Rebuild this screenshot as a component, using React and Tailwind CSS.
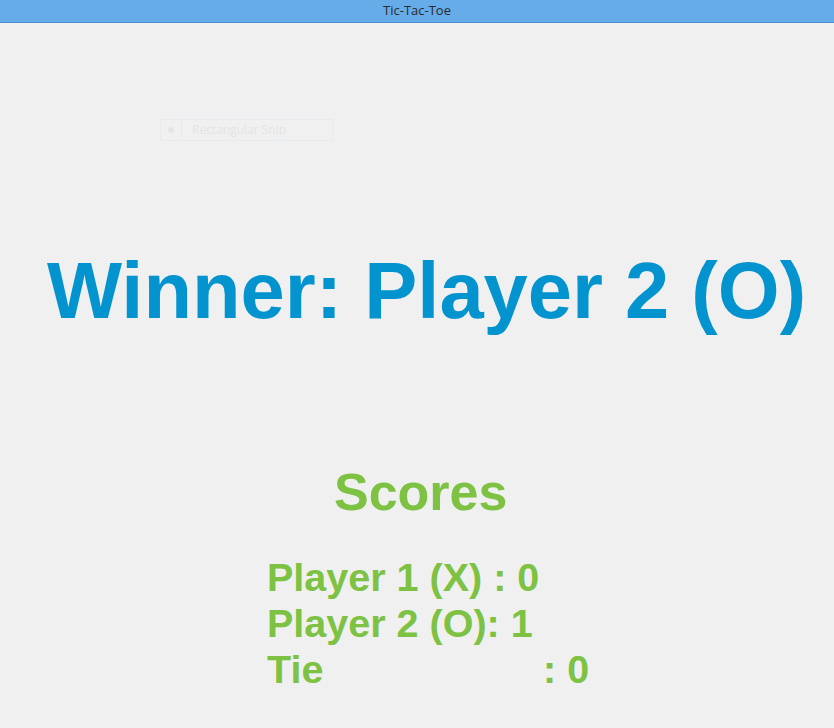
export default function App() {
  const arial = { fontFamily: '"Liberation Sans", Arial, sans-serif' };
  return (
    <div className="relative w-[834px] h-[728px] bg-[#f0f0f0] overflow-hidden" style={arial}>
      <div className="h-[23px] bg-[#65ace8] border-b border-[#4a90cf] flex items-center justify-center">
        <span className="text-[13px] text-[#2b2b2b]" style={{ fontFamily: '"Open Sans", "Noto Sans", sans-serif' }}>Tic-Tac-Toe</span>
      </div>

      <div className="absolute left-[160px] top-[119px] w-[173px] h-[22px] border border-[#e6ebf0] flex items-center">
        <div className="w-[21px] h-full border-r border-[#e8ecf0] flex items-center justify-center">
          <div className="w-[6px] h-[6px] rounded-full bg-[#e2e4e6]"></div>
        </div>
        <span className="ml-[10px] text-[12px] text-[#e4e4e4]" style={{ fontFamily: '"Open Sans", "Noto Sans", sans-serif' }}>Rectangular Snip</span>
      </div>

      <div className="mt-[228px] pl-[47px] text-[79.5px] leading-[80px] font-bold text-[#0394d0] whitespace-nowrap">
        Winner: Player 2 (O)
      </div>

      <div className="mt-[135px] pl-[334px] text-[52px] leading-[52px] font-bold text-[#7dc242] whitespace-nowrap">
        Scores
      </div>

      <div className="mt-[36px] pl-[267px] text-[39.5px] leading-[46px] font-bold text-[#7dc242] whitespace-nowrap">
        <div>Player 1 (X) : 0</div>
        <div>Player 2 (O): 1</div>
        <div className="flex">
          <span className="w-[276px]">Tie</span>
          <span>: 0</span>
        </div>
      </div>
    </div>
  );
}
